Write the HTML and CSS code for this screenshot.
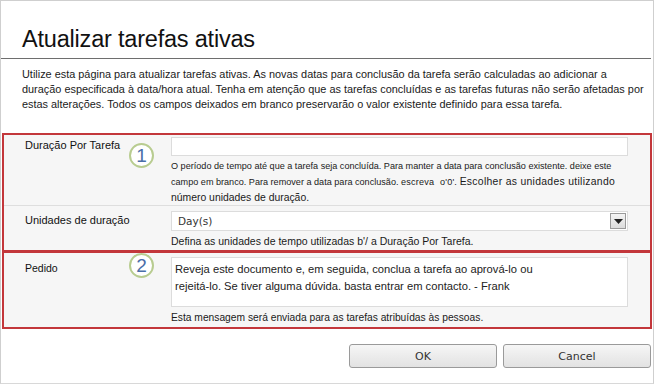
FILE: index.html
```html
<!DOCTYPE html>
<html lang="pt">
<head>
<meta charset="utf-8">
<link rel="stylesheet" href="styles.css">
</head>
<body>
<div class="dialog">
  <div class="header"><h1 class="title">Atualizar tarefas ativas</h1></div>
  <p class="intro">Utilize esta página para atualizar tarefas ativas. As novas datas para conclusão da tarefa serão calculadas ao adicionar a<br>duração especificada à data/hora atual. Tenha em atenção que as tarefas concluídas e as tarefas futuras não serão afetadas por<br>estas alterações. Todos os campos deixados em branco preservarão o valor existente definido para essa tarefa.</p>

  <div class="box box1">
    <div class="row row-dur">
      <div class="label">Duração Por Tarefa<span class="badge">1</span></div>
      <div class="field">
        <div class="input"></div>
        <div class="help">O período de tempo até que a tarefa seja concluída. Para manter a data para conclusão existente. deixe este<br>campo em branco. Para remover a data para conclusão. <span class="help-mid">escreva o'0'.</span> <span class="help-wide">Escolher as unidades utilizando</span><br><span class="help-big">número unidades de duração.</span></div>
      </div>
    </div>
    <div class="row row-units">
      <div class="label">Unidades de duração</div>
      <div class="field">
        <div class="select"><span class="sel-text">Day(s)</span><span class="sel-btn"><svg width="9" height="5" viewBox="0 0 9 5"><path d="M0 0h9L4.5 5z" fill="#222"/></svg></span></div>
        <div class="help help2">Defina as unidades de tempo utilizadas b'/ a Duração Por Tarefa.</div>
      </div>
    </div>
  </div>

  <div class="box box2">
    <div class="row row-req">
      <div class="label lbl-req">Pedido<span class="badge badge2">2</span></div>
      <div class="field">
        <div class="textarea">Reveja este documento e, em seguida, conclua a tarefa ao aprová-lo ou<br>rejeitá-lo. Se tiver alguma dúvida. basta entrar em contacto. - Frank</div>
        <div class="help help3">Esta mensagem será enviada para as tarefas atribuídas às pessoas.</div>
      </div>
    </div>
  </div>

  <div class="buttons">
    <button class="btn">OK</button>
    <button class="btn">Cancel</button>
  </div>
</div>
</body>
</html>
```

FILE: styles.css
```css
* { box-sizing: border-box; }
html, body { margin: 0; padding: 0; background: #fff; }
body { font-family: "Liberation Sans", Arial, sans-serif; color: #111; }

.dialog {
  width: 654px;
  height: 384px;
  border: 1px solid #cfcfcf;
  border-bottom-color: #d8d8d8;
  background: #fff;
  overflow: hidden;
}

.header {
  height: 58px;
  border-bottom: 1px solid #6e6e6e;
  margin-right: 2px;
  display: flex;
  align-items: flex-end;
}
.title {
  margin: 0 0 6px 21px;
  font-size: 23.5px;
  font-weight: normal;
  letter-spacing: -0.2px;
  color: #111;
  line-height: 26px;
}

.intro {
  margin: 8px 0 0 21px;
  font-size: 10.9px;
  line-height: 15px;
  color: #1a1a1a;
}

.box {
  margin-left: 1px;
  margin-right: 1px;
  border: 2px solid #c3373b;
  background: #f6f6f6;
}
.box1 { margin-top: 21px; height: 119px; }
.box2 { height: 78px; margin-top: -1px; }

.row {
  display: grid;
  grid-template-columns: 167px 1fr;
}
.row-dur { height: 71px; border-bottom: 1px solid #dedede; }
.row-units { height: 44px; }
.row-req { height: 74px; }

.label {
  position: relative;
  padding: 4px 0 0 21px;
  font-size: 11px;
  color: #111;
}
.row-units .label { padding-top: 8px; }
.lbl-req { padding-top: 9px; font-size: 10.5px; }

.badge {
  position: absolute;
  left: 125px;
  top: 8px;
  width: 25px;
  height: 25px;
  border: 2px solid #b8cc90;
  border-radius: 50%;
  background: #fff;
  color: #4a6ea8;
  font-size: 19px;
  line-height: 21px;
  text-align: center;
  font-family: "Liberation Sans", Arial, sans-serif;
}
.badge2 { top: 0px; }

.field { padding-right: 22px; }
.row-dur .field { padding-top: 2px; }
.input {
  height: 19px;
  background: #fff;
  border: 1px solid #dcdcdc;
}
.help {
  font-size: 9.1px;
  line-height: 16px;
  color: #1a1a1a;
  margin-top: 2px;
}
.help-mid { font-size: 9.1px; word-spacing: 3px; letter-spacing: 0.2px; }
.help-wide { font-size: 10.4px; letter-spacing: 0.3px; }
.help-big { font-size: 10.4px; }

.row-units .field { padding-top: 5px; }
.select {
  height: 20px;
  background: #fff;
  border: 1px solid #dcdcdc;
  display: flex;
  align-items: center;
  justify-content: space-between;
  padding: 0 1px 0 6px;
}
.sel-text {
  font-family: "DejaVu Sans", sans-serif;
  font-size: 10.5px;
  color: #333;
}
.sel-btn {
  width: 16px;
  height: 16px;
  border: 1px solid #9a9a9a;
  background: linear-gradient(#f4f4f4, #dcdcdc);
  display: flex;
  align-items: center;
  justify-content: center;
}
.help2 { margin-top: 2px; font-size: 10.5px; line-height: 17px; }

.row-req .field { padding-top: 4px; }
.textarea {
  height: 50px;
  background: #fff;
  border: 1px solid #dcdcdc;
  padding: 3px 3px;
  font-size: 11.2px;
  line-height: 17px;
  color: #222;
}
.help3 { margin-top: 2px; font-size: 10.25px; line-height: 18px; }

.buttons {
  display: flex;
  justify-content: flex-end;
  gap: 6px;
  padding: 15px 2px 0 0;
}
.btn {
  width: 148px;
  height: 24px;
  border: 1px solid #9a9a9a;
  border-radius: 3px;
  background: linear-gradient(#f6f6f6, #e2e2e2);
  font-family: "DejaVu Sans", sans-serif;
  font-size: 11px;
  color: #333;
  padding: 0;
}
```
